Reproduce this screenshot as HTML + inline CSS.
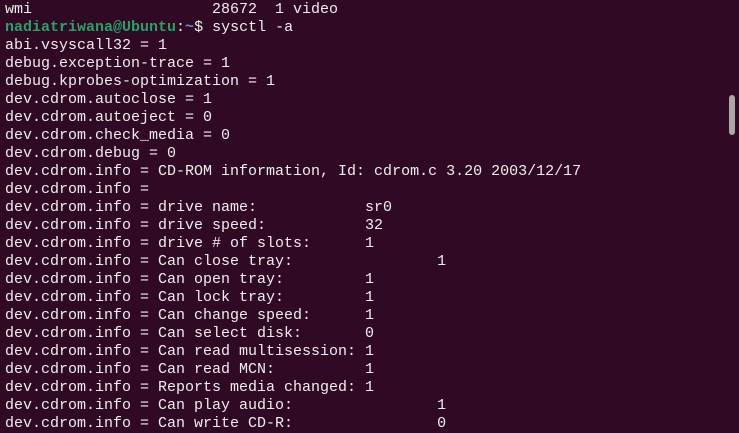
<!DOCTYPE html>
<html><head><meta charset="utf-8"><style>
html,body{margin:0;padding:0;width:739px;height:420px;overflow:hidden;background:#300a24;}
pre{position:absolute;left:5px;top:1px;margin:0;font-family:"Liberation Mono",monospace;font-size:15px;line-height:18px;color:#eeeeec;}
.g{color:#26a269;font-weight:bold}.b{color:#5c8fd6;font-weight:bold}
.sb{position:absolute;left:729px;top:95px;width:6px;height:40px;border-radius:3px;background:#a8a8a8;}
</style></head><body>
<pre>wmi                    28672  1 video
<span class="g">nadiatriwana@Ubuntu</span>:<span class="b">~</span>$ sysctl -a
abi.vsyscall32 = 1
debug.exception-trace = 1
debug.kprobes-optimization = 1
dev.cdrom.autoclose = 1
dev.cdrom.autoeject = 0
dev.cdrom.check_media = 0
dev.cdrom.debug = 0
dev.cdrom.info = CD-ROM information, Id: cdrom.c 3.20 2003/12/17
dev.cdrom.info =
dev.cdrom.info = drive name:            sr0
dev.cdrom.info = drive speed:           32
dev.cdrom.info = drive # of slots:      1
dev.cdrom.info = Can close tray:                1
dev.cdrom.info = Can open tray:         1
dev.cdrom.info = Can lock tray:         1
dev.cdrom.info = Can change speed:      1
dev.cdrom.info = Can select disk:       0
dev.cdrom.info = Can read multisession: 1
dev.cdrom.info = Can read MCN:          1
dev.cdrom.info = Reports media changed: 1
dev.cdrom.info = Can play audio:                1
dev.cdrom.info = Can write CD-R:                0</pre>
<div class="sb"></div>
</body></html>
